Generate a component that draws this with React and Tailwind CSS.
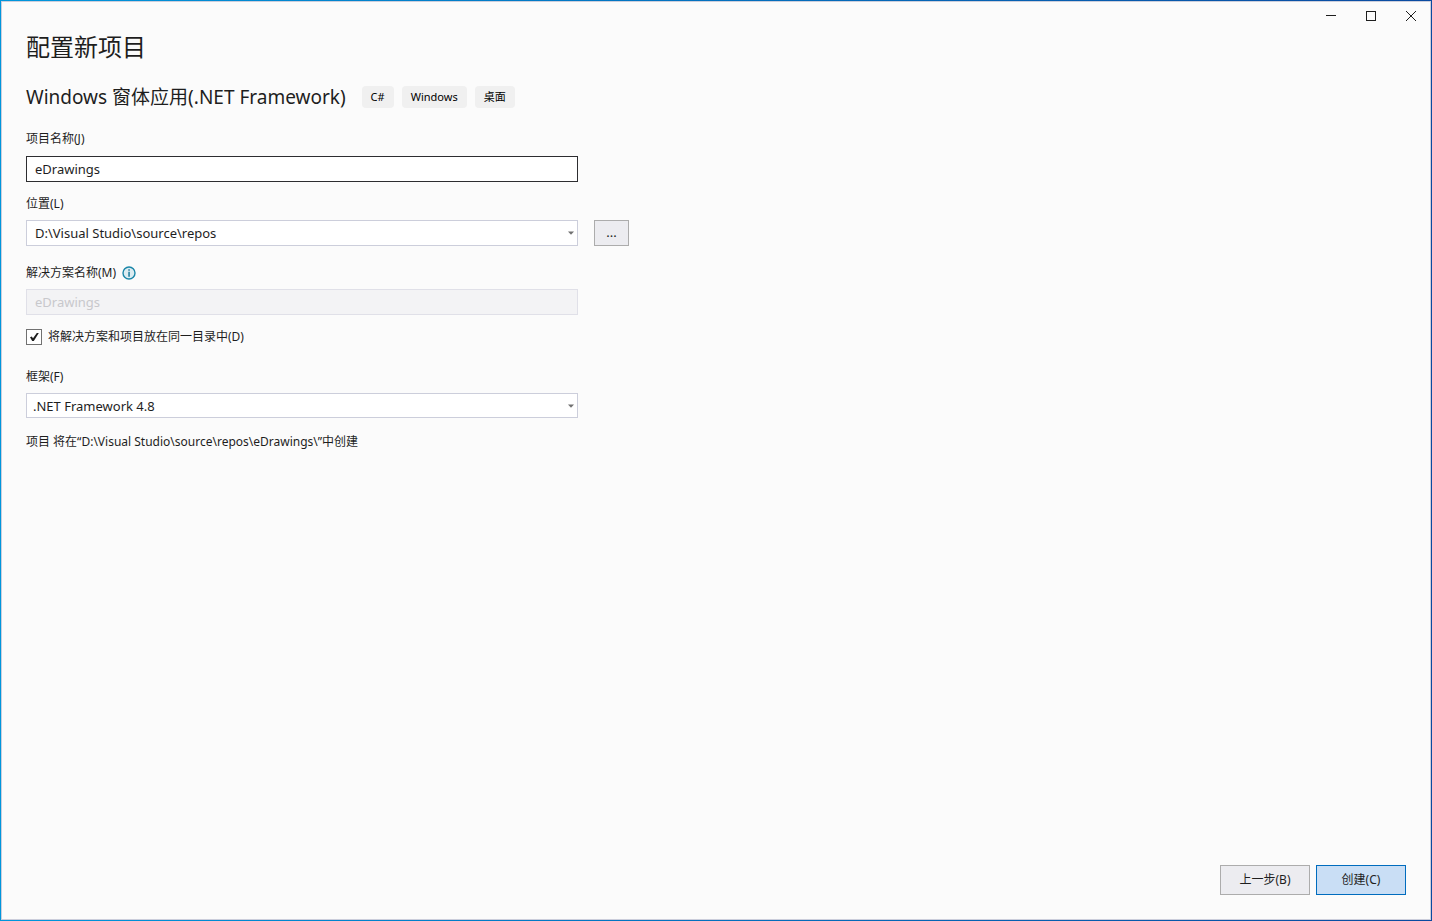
import React, { useState } from "react";

function CaptionButton({ label, children }) {
  return (
    <button type="button" aria-label={label} className="flex h-7 w-10 items-center justify-center">
      <svg width="10" height="10" viewBox="0 0 10 10" fill="none" stroke="#1e1e1e" shapeRendering="crispEdges">
        {children}
      </svg>
    </button>
  );
}

function Tag({ children }) {
  return (
    <li className="flex h-[22px] items-center rounded bg-[#f0f0f0] px-[9px] text-[11px] text-black">{children}</li>
  );
}

function Select({ id, options, className }) {
  return (
    <div className="relative w-full max-w-[552px]">
      <select
        id={id}
        className={"block w-full appearance-none border border-[#cccedb] bg-white pr-5 text-[13px] leading-5 outline-none " + className}
      >
        {options.map((option) => (
          <option key={option}>{option}</option>
        ))}
      </select>
      <svg
        className="pointer-events-none absolute top-1/2 right-1 -translate-y-1/2"
        width="6"
        height="4"
        viewBox="0 0 6 4"
        aria-hidden="true"
      >
        <path d="M0 0.5h6L3 3.7z" fill="#717171" />
      </svg>
    </div>
  );
}

function InfoIcon() {
  return (
    <svg width="14" height="14" viewBox="0 0 14 14" aria-hidden="true">
      <circle cx="7" cy="7" r="6" fill="#dcecf1" stroke="#1a86a8" strokeWidth="1.4" />
      <path d="M6.3 3.2h1.5v1.5H6.3zM6.3 5.8h1.5v5H6.3z" fill="#1a7a9c" />
    </svg>
  );
}

export default function App() {
  const [name, setName] = useState("eDrawings");
  const [sameFolder, setSameFolder] = useState(true);

  return (
    <div className="flex min-h-screen flex-col bg-linear-to-r from-[#0096dc] to-[#0a4aa0] p-px font-['Noto_Sans','Noto_Sans_CJK_SC',sans-serif] text-[#1e1e1e]">
      <div className="flex grow flex-col bg-[#fbfbfb] inset-ring inset-ring-[#cccedb]">
        <header className="flex justify-end pt-px">
          <CaptionButton label="最小化">
            <path d="M0 4.5h10" />
          </CaptionButton>
          <CaptionButton label="最大化">
            <path d="M0.5 0.5h9v9h-9z" />
          </CaptionButton>
          <CaptionButton label="关闭">
            <path d="M0 0l10 10M10 0L0 10" shapeRendering="auto" />
          </CaptionButton>
        </header>

        <form className="flex grow flex-col px-[25px] pt-px pb-[25px]" onSubmit={(e) => e.preventDefault()}>
          <h1 className="text-2xl leading-8 font-normal">配置新项目</h1>
          <div className="mt-5 flex items-center gap-4">
            <h2 className="text-[19px] leading-7 font-normal">
              Windows 窗体应用(.NET Framework)
            </h2>
            <ul className="flex gap-2">
              <Tag>C#</Tag>
              <Tag>Windows</Tag>
              <Tag>桌面</Tag>
            </ul>
          </div>

          <label htmlFor="project" className="mt-[18px] text-xs leading-5">项目名称(J)</label>
          <input
            id="project"
            value={name}
            onChange={(e) => setName(e.target.value)}
            className="mt-[7px] h-[26px] w-full max-w-[552px] border border-[#2d2d30] bg-white px-2 text-[13px] outline-none"
          />

          <label htmlFor="location" className="mt-3 text-xs leading-5">位置(L)</label>
          <div className="mt-1.5 flex gap-4">
            <Select id="location" options={["D:\\Visual Studio\\source\\repos"]} className="h-[26px] pl-2" />
            <button
              type="button"
              aria-label="浏览"
              className="h-[26px] w-[35px] shrink-0 border border-[#acacac] bg-[#ececf0] text-[13px]"
            >
              ...
            </button>
          </div>

          <div className="mt-[17px] flex items-center gap-1.5">
            <label htmlFor="solution" className="text-xs leading-5">解决方案名称(M)</label>
            <InfoIcon />
          </div>
          <input
            id="solution"
            value={name}
            readOnly
            disabled={sameFolder}
            className="mt-1.5 h-[26px] w-full max-w-[552px] border border-[#cccedb] bg-white px-2 text-[13px] outline-none disabled:border-[#e0e0e8] disabled:bg-[#f3f3f5] disabled:text-[#c8c8cc]"
          />

          <div className="mt-3 flex items-center gap-1.5">
            <span className="relative flex">
              <input
                id="same"
                type="checkbox"
                checked={sameFolder}
                onChange={(e) => setSameFolder(e.target.checked)}
                className="peer size-4 appearance-none border border-[#717171] bg-white"
              />
              <svg
                className="pointer-events-none absolute inset-0 hidden peer-checked:block"
                width="16"
                height="16"
                viewBox="0 0 16 16"
                aria-hidden="true"
              >
                <path d="M4 8.3L5.8 7.5L7 9.2L10.8 4H12.8L7.8 12H6.2Z" fill="#1e1e1e" />
              </svg>
            </span>
            <label htmlFor="same" className="text-xs leading-5">将解决方案和项目放在同一目录中(D)</label>
          </div>

          <label htmlFor="framework" className="mt-5 text-xs leading-5">框架(F)</label>
          <div className="mt-1.5">
            <Select id="framework" options={[".NET Framework 4.8"]} className="h-[25px] pl-1.5" />
          </div>

          <p className="mt-3.5 text-xs leading-5">
            项目 将在“D:\Visual Studio\source\repos\eDrawings\”中创建
          </p>

          <footer className="mt-auto flex justify-end gap-1.5">
            <button type="button" className="h-[30px] w-[90px] border border-[#acacac] bg-[#ececf0] text-xs">
              上一步(B)
            </button>
            <button type="submit" className="h-[30px] w-[90px] border border-[#006cbe] bg-[#c9def5] text-xs">
              创建(C)
            </button>
          </footer>
        </form>
      </div>
    </div>
  );
}
